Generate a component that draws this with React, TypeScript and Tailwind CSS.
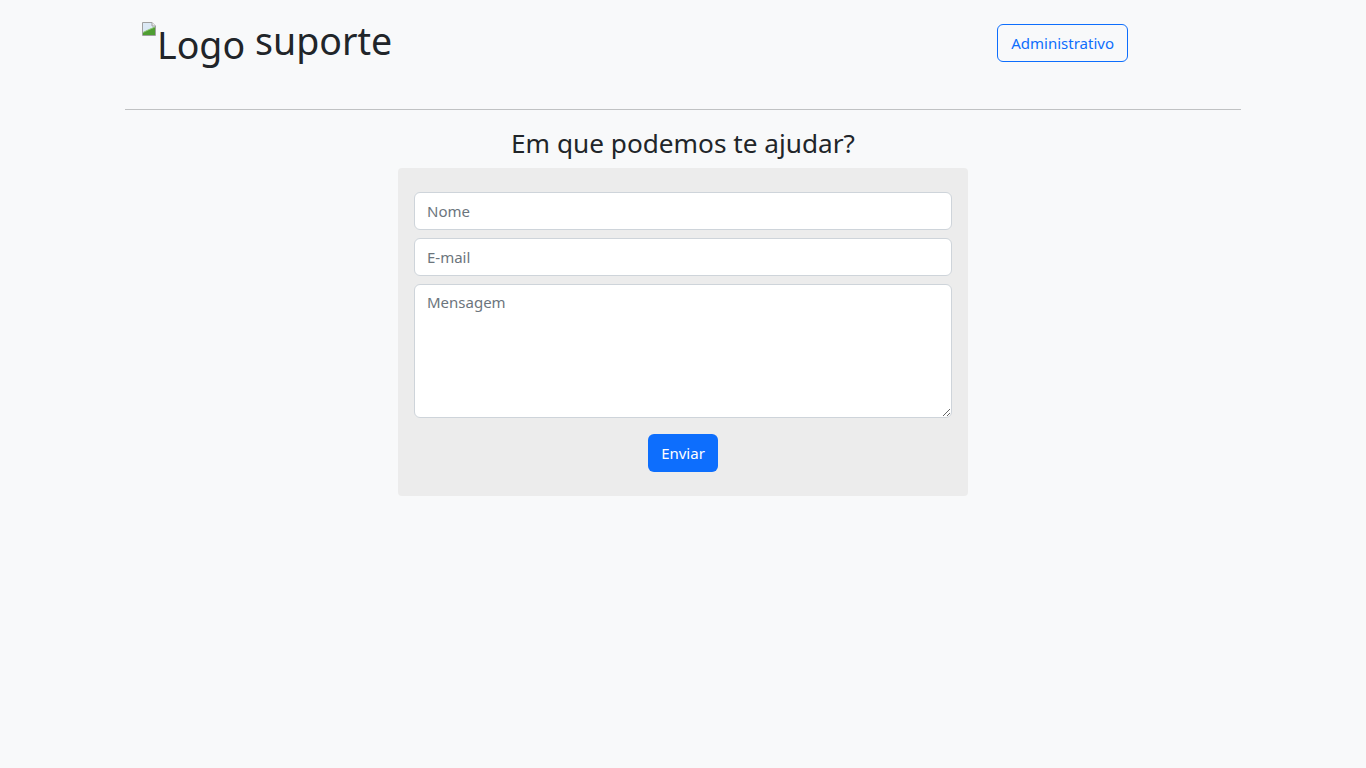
import { useState } from "react";

const BrokenImage = () => (
  <svg width="16" height="16" viewBox="0 0 16 16" className="mt-[21px] shrink-0">
    <path d="M1.5 1.5h9.5l3.5 3.5v9.5h-13z" fill="#dce9f5" stroke="#a0a0a0" />
    <path d="M11 1.5v3.5h3.5" fill="#f0f0f0" stroke="#a0a0a0" />
    <path d="M2 14V11.5C5 10 9 8 14 6V14z" fill="#4f9e32" />
    <path d="M2 11.5C5 10 9 8 14 6" fill="none" stroke="#8cc56e" strokeWidth="1" />
  </svg>
);

const App = () => {
  const [nome, setNome] = useState("");
  const [email, setEmail] = useState("");
  const [mensagem, setMensagem] = useState("");

  return (
    <div className="min-h-screen bg-[#f8f9fa] text-[#212529] font-['Noto_Sans',sans-serif]">
      <div className="mx-auto w-[1140px] px-3">
        <header className="flex h-[109px] items-start justify-between pl-4 pr-[113px]">
          <div className="flex items-start">
            <BrokenImage />
            <span className="mt-[26px] text-[37.5px] leading-none">Logo</span>
            <span className="ml-[10px] mt-[22px] text-[37.5px] leading-none">suporte</span>
          </div>
          <button className="mt-6 h-[38px] rounded-md border border-[#0d6efd] px-[13px] text-[15px] text-[#0d6efd] hover:bg-[#0d6efd] hover:text-white">
            Administrativo
          </button>
        </header>
        <hr className="border-t border-[#c0c2c3]" />

        <h3 className="mt-4 mb-2 text-center text-[26.2px] leading-[34px]">Em que podemos te ajudar?</h3>

        <form
          onSubmit={(e) => e.preventDefault()}
          className="mx-auto flex w-[570px] flex-col gap-2 rounded bg-[#ececec] px-4 pt-6 pb-6"
        >
          <input
            value={nome}
            onChange={(e) => setNome(e.target.value)}
            placeholder="Nome"
            className="h-[38px] rounded-md border border-[#ced4da] bg-white px-3 text-[15px] outline-none placeholder:text-[#6c757d]"
          />
          <input
            value={email}
            onChange={(e) => setEmail(e.target.value)}
            placeholder="E-mail"
            className="h-[38px] rounded-md border border-[#ced4da] bg-white px-3 text-[15px] outline-none placeholder:text-[#6c757d]"
          />
          <textarea
            value={mensagem}
            onChange={(e) => setMensagem(e.target.value)}
            placeholder="Mensagem"
            className="h-[134px] rounded-md border border-[#ced4da] bg-white px-3 py-1.5 text-[15px] outline-none placeholder:text-[#6c757d]"
          />
          <div className="mt-2 flex justify-center">
            <button type="submit" className="h-[38px] w-[70px] rounded-md bg-[#0d6efd] text-[15px] text-white">
              Enviar
            </button>
          </div>
        </form>
      </div>
    </div>
  );
};

export default App;
